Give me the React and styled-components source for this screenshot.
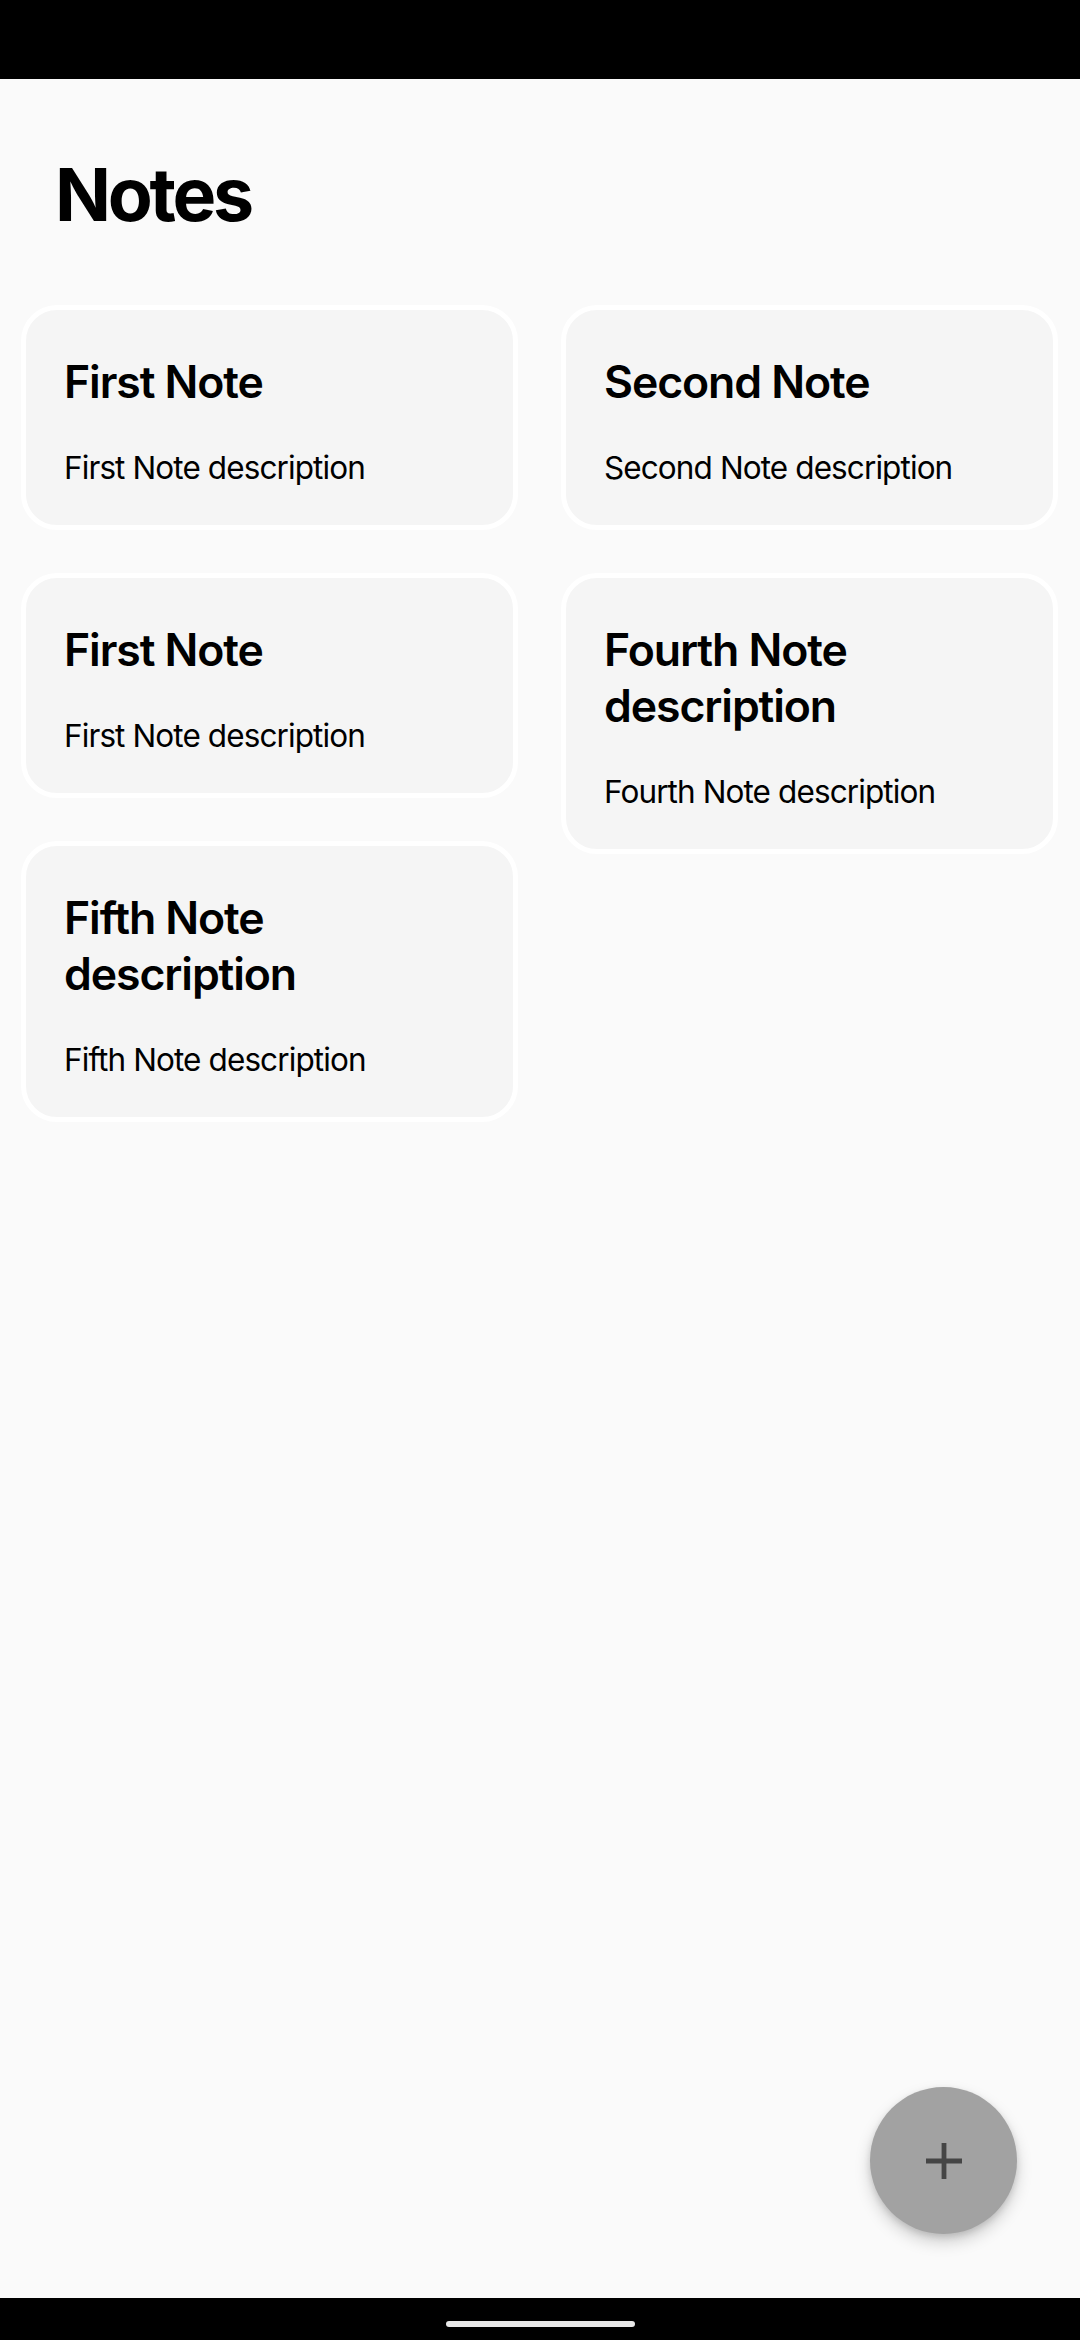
import React from 'react';
import styled, { createGlobalStyle } from 'styled-components';

const notes = [
  { id: 1, title: 'First Note', body: 'First Note description' },
  { id: 2, title: 'Second Note', body: 'Second Note description' },
  { id: 3, title: 'First Note', body: 'First Note description' },
  { id: 4, title: 'Fourth Note description', body: 'Fourth Note description' },
  { id: 5, title: 'Fifth Note description', body: 'Fifth Note description' },
];

const GlobalStyle = createGlobalStyle`
  html, body {
    margin: 0;
    padding: 0;
    background: #fafafa;
  }
  body {
    font-family: Inter, "Noto Sans", "Liberation Sans", sans-serif;
    color: #000;
  }
  * { box-sizing: border-box; }
`;

// staggered grid: items go to the left / right column by index
const splitColumns = (items) => {
  const left = [];
  const right = [];
  items.forEach((item, i) => (i % 2 === 0 ? left : right).push(item));
  return [left, right];
};

const NoteCard = ({ note }) => (
  <Card>
    <CardTitle>{note.title}</CardTitle>
    <CardBody>{note.body}</CardBody>
  </Card>
);

const App = () => {
  const [left, right] = splitColumns(notes);
  return (
    <>
      <GlobalStyle />
      <Screen>
        <StatusBar />
        <Content>
          <Heading>Notes</Heading>
          <Grid>
            <Column>
              {left.map((n) => <NoteCard key={n.id} note={n} />)}
            </Column>
            <Column>
              {right.map((n) => <NoteCard key={n.id} note={n} />)}
            </Column>
          </Grid>
          <Fab aria-label="Add note">
            <svg width="38" height="38" viewBox="0 0 38 38">
              <path d="M19 1v36M1 19h36" stroke="#454545" strokeWidth="4.8" fill="none" />
            </svg>
          </Fab>
        </Content>
        <NavBar>
          <HomePill />
        </NavBar>
      </Screen>
    </>
  );
};

const Screen = styled.div`
  width: 1080px;
  height: 2340px;
  display: flex;
  flex-direction: column;
  background: #fafafa;
`;

const StatusBar = styled.div`
  height: 79px;
  flex-shrink: 0;
  background: #000;
`;

const Content = styled.main`
  position: relative;
  flex: 1;
  padding: 71px 22px 0 21px;
`;

const Heading = styled.h1`
  margin: 0 0 66px 34px;
  font-size: 73.5px;
  font-weight: 700;
  line-height: 89px;
  letter-spacing: -3.3px;
`;

const Grid = styled.div`
  display: grid;
  grid-template-columns: 1fr 1fr;
  column-gap: 43px;
  align-items: start;
`;

const Column = styled.div`
  display: flex;
  flex-direction: column;
  gap: 43px;
`;

const Card = styled.div`
  background: #f5f5f5;
  border: 5px solid #ffffff;
  border-radius: 36px;
  padding: 44px 38px 38px;
  display: flex;
  flex-direction: column;
  gap: 39px;
`;

const CardTitle = styled.div`
  font-size: 44.6px;
  font-weight: 600;
  line-height: 56px;
  letter-spacing: -1.1px;
`;

const CardBody = styled.div`
  font-size: 31.5px;
  font-weight: 400;
  line-height: 38px;
  letter-spacing: -0.9px;
`;

const Fab = styled.button`
  position: absolute;
  right: 63px;
  bottom: 64px;
  width: 147px;
  height: 147px;
  border: none;
  border-radius: 50%;
  background: #a2a2a2;
  display: flex;
  align-items: center;
  justify-content: center;
  box-shadow: 0 8px 16px rgba(0, 0, 0, 0.18), 0 3px 6px rgba(0, 0, 0, 0.12);
  padding: 0;
`;

const NavBar = styled.div`
  height: 42px;
  flex-shrink: 0;
  background: #000;
  display: flex;
  justify-content: center;
  padding-top: 23px;
`;

const HomePill = styled.div`
  width: 189px;
  height: 6px;
  border-radius: 3px;
  background: #e8e8e8;
`;

export default App;
